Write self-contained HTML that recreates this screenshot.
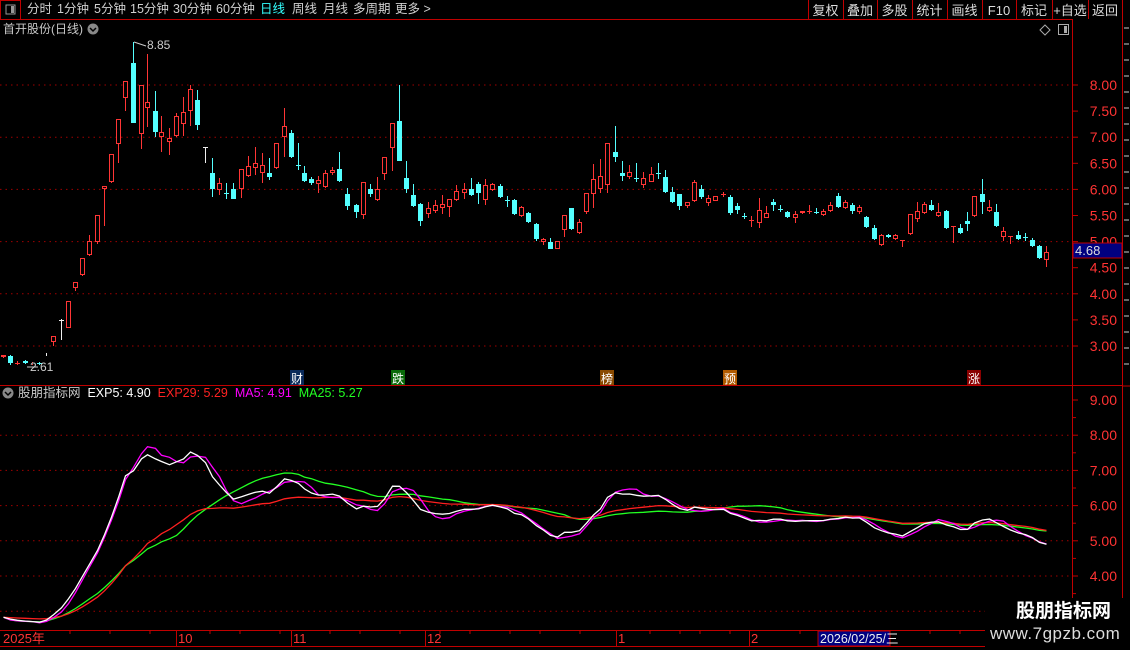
<!DOCTYPE html>
<html><head><meta charset="utf-8"><style>
html,body{margin:0;padding:0;background:#000;width:1130px;height:650px;overflow:hidden;font-family:"Liberation Sans","Noto Sans CJK SC",sans-serif}
#w{position:relative;width:1130px;height:650px}
.t{position:absolute;white-space:nowrap;font-size:13px;line-height:15px}
.b{position:absolute;top:2px;white-space:nowrap;font-size:12.5px;line-height:15px;color:#d0d0d0}
</style></head><body><div id="w">
<svg id="s" width="1130" height="650" style="position:absolute;left:0;top:0" xmlns="http://www.w3.org/2000/svg"></svg>
<div class="b" style="left:27px">分时</div>
<div class="b" style="left:57px">1分钟</div>
<div class="b" style="left:94px">5分钟</div>
<div class="b" style="left:130px">15分钟</div>
<div class="b" style="left:173px">30分钟</div>
<div class="b" style="left:216px">60分钟</div>
<div class="b" style="left:260px;color:#3ff">日线</div>
<div class="b" style="left:292px">周线</div>
<div class="b" style="left:323px">月线</div>
<div class="b" style="left:353px">多周期</div>
<div class="b" style="left:395px">更多 &gt;</div>
<div class="t" style="left:3px;top:22px;color:#c8c8c8;font-size:12px">首开股份(日线)</div>
<div class="t" style="left:18px;top:386px;color:#c8c8c8;font-size:12.5px">股朋指标网 <span style="color:#fff">&nbsp;EXP5: 4.90</span> <span style="color:#f22">&nbsp;EXP29: 5.29</span> <span style="color:#f0f">&nbsp;MA5: 4.91</span> <span style="color:#2f2">&nbsp;MA25: 5.27</span></div>
<div class="t" style="left:147px;top:38px;color:#ccc;font-size:12px">8.85</div>
<div class="t" style="left:30px;top:360px;color:#ccc;font-size:12px">2.61</div>
<div style="position:absolute;left:985px;top:598px;width:145px;height:52px;background:#000"></div>
<div class="t" style="left:1016px;top:601px;color:#fff;font-weight:bold;font-size:19px;line-height:22px">股朋指标网</div>
<div class="t" style="left:990px;top:623px;color:#ddd;font-size:17px;line-height:22px;letter-spacing:0.5px">www.7gpzb.com</div>
</div>
<script>
var S=document.getElementById('s'),h='';
function R(x,y,w,hh,f,st){h+='<rect x="'+x+'" y="'+y+'" width="'+w+'" height="'+hh+'" fill="'+(f||'none')+'"'+(st?' stroke="'+st+'"':'')+'/>';}
function L(x1,y1,x2,y2,c,d){h+='<line x1="'+x1+'" y1="'+y1+'" x2="'+x2+'" y2="'+y2+'" stroke="'+c+'"'+(d?' stroke-dasharray="'+d+'"':'')+'/>';}
function T(x,y,s,c,a,fs){h+='<text x="'+x+'" y="'+y+'" fill="'+c+'" font-size="'+(fs||13)+'" text-anchor="'+(a||'start')+'" font-family="Liberation Sans,Noto Sans CJK SC,sans-serif">'+s+'</text>';}
var RC='#c00000';
L(0,19.5,1072,19.5,RC);R(0.5,0.5,20,19,'none',RC);R(6,5,9,9,'none','#999');R(11,6,3,7,'#999');
var bx=[808,843,877,912,947,982,1016,1052,1088,1122];
var bl=['复权','叠加','多股','统计','画线','F10','标记','+自选','返回'];
for(var i=0;i<bx.length;i++)L(bx[i]+.5,0,bx[i]+.5,19,RC);
for(i=0;i<9;i++)T((bx[i]+bx[i+1])/2,15,bl[i],'#ddd','middle');
L(1072.5,19,1072.5,650,RC);L(1122.5,19,1122.5,650,RC);
L(0,385.5,1122,385.5,RC);L(0,630.5,985,630.5,RC);L(0,646.5,985,646.5,RC);
h+='<circle cx="93" cy="29" r="5.5" fill="#888"/><path d="M90 28l3 3 3-3" stroke="#000" stroke-width="1.5" fill="none"/>';
h+='<circle cx="8" cy="393" r="5.5" fill="#888"/><path d="M5 392l3 3 3-3" stroke="#000" stroke-width="1.5" fill="none"/>';
h+='<path d="M1045 25l5 5-5 5-5-5z" stroke="#aaa" fill="none"/>';R(1058.5,24.5,10,10,'none','#aaa');R(1064,26,3,7,'#aaa');
function py(p){return 85+(8-p)*52.2;}
for(var p=3;p<=8;p++){L(0,py(p),1072,py(p),'#a00000','1.5 4');}
for(p=3;p<=8;p+=0.5){var y=py(p);L(1072,y,1078,y,RC);T(1117,y+5,p.toFixed(2),'#ff3333','end',14);}
function ly(v){return 400+(9-v)*35.2;}
for(var v=3;v<=9;v++){if(v<9)L(0,ly(v),1072,ly(v),'#a00000','1.5 4');L(1072,ly(v),1078,ly(v),RC);if(v>=4)T(1117,ly(v)+5,v.toFixed(2),'#ff3333','end',14);L(1072,ly(v)+17.6,1076,ly(v)+17.6,RC);}
var C=[[3,355,357,355,358,'r'],[10,356,363,355,365,'c'],[17,363,363,361,365,'r'],[25,361,363,360,364,'c'],[32,363,364,362,365,'r'],[39,363,364,362,365,'c'],[46,352,353,352,356,'w'],[53,336,342,336,346,'r'],[61,320,320,319,340,'w'],[68,301,328,301,328,'r'],[75,282,288,282,291,'r'],[82,258,275,258,276,'r'],[89,241,255,235,256,'r'],[97,215,242,215,244,'r'],[104,186,189,186,226,'r'],[111,154,182,154,183,'r'],[118,119,144,119,163,'r'],[125,81,98,81,111,'r'],[133,63,123,42,123,'c'],[141,85,134,85,149,'r'],[147,102,108,54,127,'r'],[155,111,132,91,137,'c'],[161,132,137,116,152,'r'],[169,138,142,128,155,'r'],[176,116,136,113,137,'r'],[183,112,124,97,136,'r'],[190,89,111,85,126,'r'],[197,100,125,90,130,'c'],[205,147,147,147,163,'w'],[212,173,189,158,197,'c'],[219,183,190,178,195,'r'],[226,193,193,183,199,'c'],[233,189,199,183,199,'c'],[241,169,189,169,198,'r'],[248,166,176,156,177,'r'],[255,163,168,147,175,'r'],[262,165,173,153,183,'r'],[269,173,177,158,180,'c'],[276,143,168,143,169,'r'],[284,126,137,108,157,'r'],[291,133,157,130,158,'c'],[298,165,165,143,170,'c'],[304,173,181,166,182,'c'],[311,179,183,177,185,'c'],[318,180,184,176,193,'r'],[325,173,187,170,188,'r'],[332,170,173,167,175,'r'],[339,169,181,152,182,'c'],[347,194,206,188,210,'c'],
[356,205,212,204,218,'c'],[363,182,215,182,219,'r'],[370,189,194,184,197,'c'],[377,189,200,177,201,'r'],[384,157,174,157,180,'r'],[392,123,148,123,171,'r'],[399,121,161,85,161,'c'],[406,178,189,161,193,'c'],[413,195,206,184,207,'c'],[420,204,221,203,226,'c'],[428,208,214,202,218,'r'],[435,205,211,200,213,'r'],[442,204,208,195,214,'r'],[449,199,207,199,217,'r'],[456,191,200,185,201,'r'],[464,189,193,183,199,'r'],[471,189,195,178,196,'c'],[478,184,193,182,204,'c'],[485,185,200,179,205,'r'],[492,184,190,183,191,'r'],[500,186,197,184,198,'c'],[507,200,200,196,207,'c'],[514,200,214,199,215,'c'],[521,207,216,206,217,'r'],[528,213,222,212,223,'c'],[536,224,239,223,241,'c'],[543,239,242,238,245,'r'],[550,242,249,238,249,'c'],[557,241,249,241,249,'r'],[564,215,230,215,237,'r'],[571,208,229,208,230,'c'],[579,222,233,219,234,'r'],[586,193,212,193,214,'r'],[593,179,194,164,208,'r'],[600,176,189,159,193,'r'],[607,143,185,143,193,'r'],[615,152,157,126,162,'c'],[622,173,176,161,181,'c'],[629,172,177,165,179,'r'],[636,178,178,163,182,'c'],[643,178,185,172,188,'r'],[651,174,182,167,182,'r'],[658,173,173,163,179,'c'],[665,177,192,170,193,'c'],[672,192,202,187,203,'c'],[679,194,206,194,210,'c'],[687,202,206,202,208,'r'],[694,182,201,180,202,'r'],[701,189,197,185,199,'c'],[708,198,203,195,206,'r'],[715,196,201,196,201,'r'],[723,194,194,192,197,'r'],[730,197,213,195,215,'c'],[737,206,210,203,214,'c'],[744,216,216,213,219,'c'],[751,220,220,216,227,'r'],[759,210,223,198,228,'r'],[766,213,218,206,218,'r'],[773,202,205,199,211,'c'],[780,209,209,205,212,'c'],[787,212,217,211,218,'c'],[795,214,218,211,223,'r'],[802,211,213,211,214,'r'],[809,211,211,205,214,'r'],[816,212,212,208,214,'c'],[823,211,215,209,216,'r'],[830,205,211,202,212,'r'],[838,196,207,193,208,'c'],[845,202,208,200,209,'r'],[852,205,211,203,214,'c'],[859,207,212,205,214,'r'],[866,217,227,216,228,'c'],[874,228,239,225,240,'c'],[881,235,245,234,246,'r'],[888,235,237,234,238,'c'],[895,235,239,234,240,'r'],[902,240,240,240,247,'r'],[910,214,234,214,235,'r'],[917,211,219,202,222,'r'],[924,204,213,202,214,'r'],[931,205,210,200,211,'c'],[938,212,216,203,217,'r'],[946,211,228,210,229,'c'],[953,226,226,226,243,'r'],[960,228,233,224,234,'c'],[967,221,224,212,231,'c'],[974,196,216,196,217,'r'],[982,194,202,179,214,'c'],[989,207,211,200,212,'r'],[996,212,226,204,227,'c'],[1003,231,237,227,241,'r'],[1010,236,236,236,244,'r'],[1018,235,239,231,240,'c'],[1025,237,237,233,241,'c'],[1032,240,246,238,247,'c'],[1039,246,258,245,259,'c'],[1046,252,260,246,267,'r']];
var closes=[];
C.forEach(function(c){var x=c[0],col=c[5]=='r'?'#ff3535':c[5]=='c'?'#54ffff':'#eee';
 L(x+.5,c[3],x+.5,c[1],col);L(x+.5,c[2],x+.5,c[4],col);
 if(c[2]-c[1]<1){L(x-2,c[1]+.5,x+3,c[1]+.5,col);}
 else if(c[5]=='c')R(x-2,c[1],5,c[2]-c[1],col);
 else R(x-1.5,c[1]+.5,4,c[2]-c[1]-1,'#000',col);
 var cy=c[5]=='r'?c[1]:c[5]=='c'?c[2]:(c[1]+c[2])/2;
 closes.push(8-(cy-85)/52.2);});
L(134,42,146,46,'#ccc');L(27,367,38,367,'#ccc');
function ema(n){var o=[],e=closes[0];closes.forEach(function(v,i){e=i?(2*v+(n-1)*e)/(n+1):v;o.push(e)});return o;}
function ma(n){var o=[];closes.forEach(function(v,i){var s=0,k=0;for(var j=Math.max(0,i-n+1);j<=i;j++){s+=closes[j];k++}o.push(s/k)});return o;}
function pl(a,col){var d='';a.forEach(function(v,i){d+=(i?'L':'M')+(C[i][0]+.5)+' '+ly(v).toFixed(1)});h+='<path d="'+d+'" stroke="'+col+'" fill="none" stroke-width="1.3"/>';}
pl(ma(25),'#22ff22');pl(ema(29),'#ff2020');pl(ma(5),'#ff00ff');pl(ema(5),'#ffffff');
function M(x,s,bg,fg){R(x,370,14,15,bg);T(x+7,383,s,fg||'#fff','middle',12);}
M(290,'财','#0a2a5a');M(391,'跌','#0a6a0a');M(600,'榜','#8a4a00');M(723,'预','#b05a00');M(967,'涨','#8a0000');
R(1073,243,49,15,'#000080',RC);T(1075,255,'4.68','#ddd','start',13);
for(i=0;i<22;i++){L(1124,28+i*16,1129,28+i*16,'#ccc');}
L(1122,386,1130,386,RC);
var tk=[70,110,150,210,240,280,330,360,400,440,470,510,540,580,650,680,700,730,800,830,880,930,960];
tk.forEach(function(x){L(x,631,x,634,RC)});
[[176,'10'],[291,'11'],[425,'12'],[616,'1'],[749,'2']].forEach(function(a){L(a[0]+.5,631,a[0]+.5,646,RC);T(a[0]+2,643,a[1],'#ff3333','start',13);});
T(3,643,'2025年','#ff3333','start',13);
R(818,631,72,15,'#000080',RC);T(820,643,'2026/02/25/三','#eee','start',12.5);
S.innerHTML=h;
</script>
</body></html>
